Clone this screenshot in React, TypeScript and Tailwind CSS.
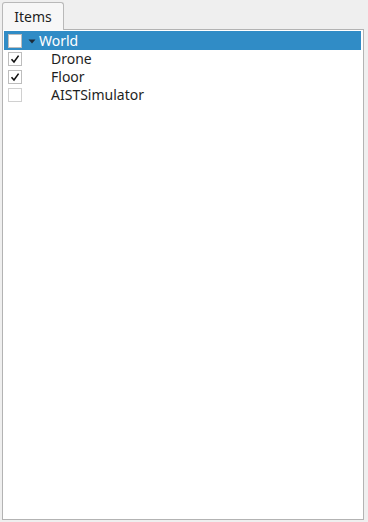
import React from "react";

const items = [
  { name: "Drone", checked: true },
  { name: "Floor", checked: true },
  { name: "AISTSimulator", checked: false },
];

function Check({ checked, light }: { checked?: boolean; light?: boolean }) {
  return (
    <div
      className={
        "flex size-[14px] shrink-0 items-center justify-center border " +
        (light ? "border-[#d0d0d0] bg-white" : "border-[#bdbdbd] bg-white")
      }
    >
      {checked && (
        <svg width="10" height="10" viewBox="0 0 10 10">
          <path d="M1.5 5.2 L4 8 L8.6 1.6" fill="none" stroke="#111" strokeWidth="1.6" />
        </svg>
      )}
    </div>
  );
}

export default function App() {
  return (
    <div className="flex h-[522px] w-[368px] flex-col bg-[#efefef] pl-[2px] pr-[4px] pt-[2px] pb-[2px] font-['Noto_Sans',sans-serif] text-[14px] text-[#1e1e1e]">
      <div className="flex">
        <div className="relative -mb-px flex h-[28px] w-[62px] items-center justify-center rounded-t-[3px] border border-b-0 border-[#b9b9b9] bg-[#f7f7f7] pb-px">
          Items
        </div>
      </div>
      <div className="flex-1 border border-[#b3b3b3] bg-white p-px pr-[2px]">
        <div className="flex h-[19px] items-center bg-[#308cc6] pl-[4px] text-white">
          <Check />
          <svg width="10" height="10" viewBox="0 0 10 10" className="ml-[5px]">
            <path d="M1.5 3.5 L8.5 3.5 L5 7.5 Z" fill="#1c2a3a" />
          </svg>
          <span className="ml-[2px] leading-none">World</span>
        </div>
        {items.map((it) => (
          <div key={it.name} className="flex h-[18px] items-center pl-[4px]">
            <Check checked={it.checked} light={!it.checked} />
            <span className="ml-[29px] leading-none">{it.name}</span>
          </div>
        ))}
      </div>
    </div>
  );
}
